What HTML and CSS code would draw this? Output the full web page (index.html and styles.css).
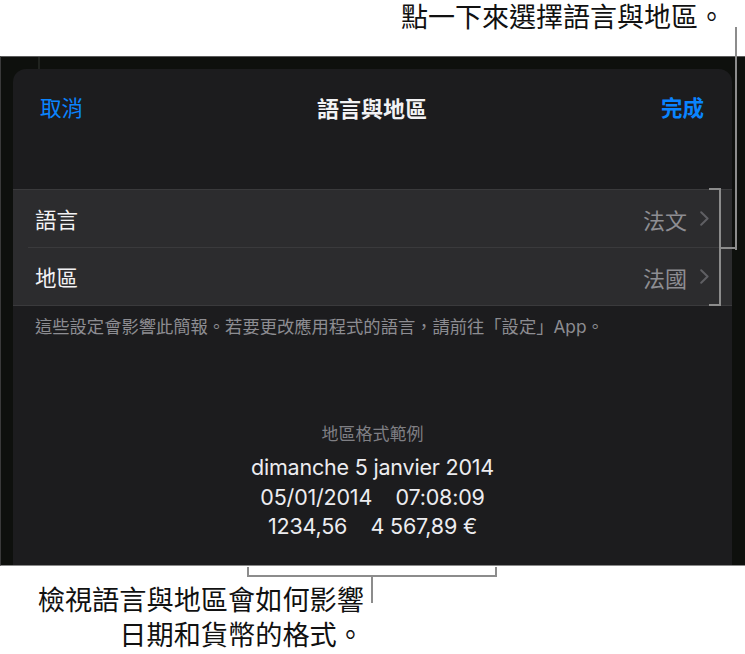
FILE: index.html
```html
<!DOCTYPE html>
<html lang="zh-Hant">
<head>
<meta charset="utf-8">
<title>語言與地區</title>
<link rel="stylesheet" href="styles.css">
</head>
<body>
<div class="page">
  <div class="callout-top">點一下來選擇語言與地區。</div>
  <div class="screen">
    <div class="card">
      <div class="nav">
        <span class="nav-btn">取消</span>
        <span class="nav-title">語言與地區</span>
        <span class="nav-btn nav-done">完成</span>
      </div>
      <div class="group">
        <div class="row">
          <span class="row-label">語言</span>
          <span class="row-value">法文</span>
          <svg class="chev" width="9" height="15" viewBox="0 0 9 15"><polyline points="1.2,1.2 7.6,7.5 1.2,13.8" fill="none" stroke="#5f5f63" stroke-width="2" stroke-linecap="round" stroke-linejoin="round"/></svg>
        </div>
        <div class="row">
          <span class="row-label">地區</span>
          <span class="row-value">法國</span>
          <svg class="chev" width="9" height="15" viewBox="0 0 9 15"><polyline points="1.2,1.2 7.6,7.5 1.2,13.8" fill="none" stroke="#5f5f63" stroke-width="2" stroke-linecap="round" stroke-linejoin="round"/></svg>
        </div>
      </div>
      <p class="footnote">這些設定會影響此簡報。若要更改應用程式的語言，請前往「設定」App。</p>
      <div class="example">
        <div class="example-label">地區格式範例</div>
        <div class="example-lines">
          <div>dimanche 5 janvier 2014</div>
          <div>05/01/2014&nbsp;&nbsp;&nbsp;&nbsp;07:08:09</div>
          <div>1234,56&nbsp;&nbsp;&nbsp;&nbsp;4 567,89 €</div>
        </div>
      </div>
    </div>
  </div>
  <div class="callout-bottom">
    <div>檢視語言與地區會如何影響</div>
    <div>日期和貨幣的格式。</div>
  </div>
  <svg class="leaders" width="745" height="654" viewBox="0 0 745 654">
    <g fill="#8c8c8c">
      <rect x="735" y="27" width="2" height="223"/>
      <rect x="719" y="247" width="18" height="2"/>
      <rect x="719" y="188" width="2" height="118"/>
      <rect x="709" y="188" width="12" height="2"/>
      <rect x="709" y="304" width="12" height="2"/>
      <rect x="247" y="575" width="250" height="2"/>
      <rect x="247" y="567" width="2" height="10"/>
      <rect x="495" y="567" width="2" height="10"/>
      <rect x="371" y="575" width="2" height="28"/>
    </g>
  </svg>
</div>
</body>
</html>
```

FILE: styles.css
```css
html, body {
  margin: 0;
  padding: 0;
  background: #ffffff;
}

.page {
  position: relative;
  width: 745px;
  height: 654px;
  overflow: hidden;
  font-family: "Noto Sans CJK TC", "Noto Sans", sans-serif;
}

.callout-top {
  height: 56px;
  box-sizing: border-box;
  padding-top: 1px;
  padding-right: 20px;
  text-align: right;
  font-size: 27px;
  line-height: 30px;
  color: #111111;
}

.screen {
  height: 510px;
  box-sizing: border-box;
  border-top: 1px solid #5c5c5c;
  border-bottom: 1px solid #8a8a8a;
  border-left: 1px solid #3a3a3a;
  padding: 12px 13px 0 12px;
  background:
    linear-gradient(to right, transparent 37px, #20231f 37px, #20231f 39px, transparent 39px) top left / 100% 12px no-repeat,
    #0e100d;
  overflow: hidden;
}

.card {
  height: 100%;
  background: #1c1c1e;
  border-radius: 13px 13px 0 0;
  display: flex;
  flex-direction: column;
}

.nav {
  height: 76px;
  display: grid;
  grid-template-columns: 1fr auto 1fr;
  align-items: center;
  padding: 0 28px 0 27px;
}

.nav-btn {
  font-size: 21.5px;
  line-height: 28px;
  color: #0a84ff;
}

.nav-done {
  text-align: right;
  font-weight: 700;
}

.nav-title {
  font-size: 22px;
  line-height: 28px;
  font-weight: 700;
  color: #f2f2f4;
}

.group {
  margin-top: 44px;
  background: #2c2c2e;
  border-top: 1px solid #3a3a3c;
  border-bottom: 1px solid #3a3a3c;
}

.row {
  height: 57px;
  display: flex;
  align-items: center;
  margin-left: 15px;
  padding-left: 7px;
  padding-right: 23px;
}

.row + .row {
  border-top: 1px solid #3a3a3c;
}

.row-label {
  flex: 1;
  font-size: 21.5px;
  line-height: 28px;
  color: #f2f2f4;
}

.row-value {
  font-size: 22px;
  line-height: 28px;
  color: #8e8e93;
  margin-right: 13px;
}

.chev {
  display: block;
}

.footnote {
  margin: 10px 0 0;
  padding-left: 22px;
  font-family: "Inter", "Noto Sans CJK TC", sans-serif;
  font-size: 17.3px;
  line-height: 22px;
  color: #8d8d92;
}

.example {
  margin-top: 84px;
  text-align: center;
}

.example-label {
  font-size: 17px;
  line-height: 22px;
  color: #7f7f84;
}

.example-lines {
  margin-top: 9px;
  font-family: "Inter", "Noto Sans", sans-serif;
  font-size: 21.5px;
  letter-spacing: -0.2px;
  line-height: 29.5px;
  color: #ececf0;
}

.callout-bottom {
  margin-top: 15px;
  padding-right: 381px;
  text-align: right;
  font-size: 27.2px;
  line-height: 35px;
  color: #111111;
}

.leaders {
  position: absolute;
  top: 0;
  left: 0;
  pointer-events: none;
}
```
